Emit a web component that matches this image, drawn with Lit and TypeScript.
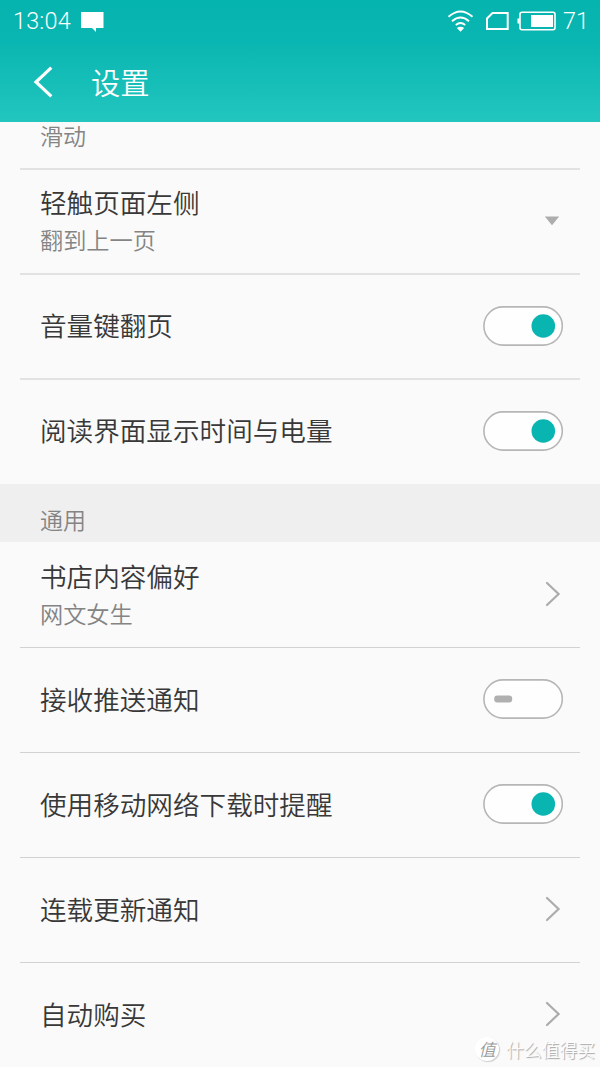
import { LitElement, html, css, svg, nothing } from "lit";
import { customElement, property } from "lit/decorators.js";

type Control = "on" | "off" | "next" | "menu";

@customElement("setting-row")
class SettingRow extends LitElement {
  @property() label = "";
  @property() note = "";
  @property() control: Control = "next";

  static styles = css`
    :host {
      display: flex;
      box-sizing: border-box;
      height: 105px;
      margin: 0 20px;
      padding: 0 17px 0 20px;
      align-items: center;
      justify-content: space-between;
      border-top: 1px solid #d2d2d2;
    }
    .text {
      margin-top: -2px;
    }
    :host(.double) .text {
      margin-top: -3px;
    }
    .label {
      font-size: 26.6px;
      line-height: 38px;
      color: #383838;
      white-space: nowrap;
    }
    .note {
      font-size: 23.2px;
      line-height: 36px;
      color: #848484;
    }
    svg {
      display: block;
      margin-top: -2px;
    }
    :host(.double) svg {
      margin-top: -1px;
    }
    .next {
      margin-right: 1px;
    }
    .menu {
      margin-right: 3px;
    }
  `;

  private renderControl() {
    switch (this.control) {
      case "on":
      case "off":
        return html`
          <svg width="80" height="40" viewBox="0 0 80 40">
            <rect x=".9" y=".9" width="78.4" height="38.2" rx="19.1" fill="#fefefe" stroke="#b6b6b6" stroke-width="1.6" />
            ${this.control === "on"
              ? svg`<circle cx="60.3" cy="20" r="11.8" fill="#08b5b1" />`
              : svg`<rect x="11.2" y="16.5" width="18" height="7" rx="3.2" fill="#b0b0b0" />`}
          </svg>
        `;
      case "menu":
        return html`<svg class="menu" width="16" height="10" viewBox="0 0 16 10"><path d="M.8 .5H15.2L8 9.3Z" fill="#adadad" /></svg>`;
      default:
        return html`<svg class="next" width="18" height="28" viewBox="0 0 18 28"><path d="M3 3 14.6 14 3 25" fill="none" stroke="#acacac" stroke-width="2.2" stroke-linecap="round" /></svg>`;
    }
  }

  render() {
    return html`
      <div class="text">
        <div class="label">${this.label}</div>
        ${this.note ? html`<div class="note">${this.note}</div>` : nothing}
      </div>
      ${this.renderControl()}
    `;
  }
}

@customElement("app-root")
class AppRoot extends LitElement {
  static styles = css`
    :host {
      display: block;
      position: relative;
      height: 1067px;
      overflow: hidden;
      background: #fafafa;
      font-family: "Noto Sans CJK SC", sans-serif;
      font-weight: 350;
    }
    header {
      height: 122px;
      background: linear-gradient(#05b3af, #0ab6b1 35%, #22c6bf);
      color: #fff;
    }
    .status {
      display: flex;
      align-items: center;
      height: 42px;
      padding: 0 11px 0 13px;
      font: 300 23.4px/42px Roboto, sans-serif;
    }
    .status svg {
      display: block;
    }
    .clock {
      width: 59px;
      letter-spacing: 0.2px;
    }
    .bubble {
      margin-left: 8px;
    }
    .icons {
      margin-left: auto;
      margin-right: 6px;
    }
    .bar {
      display: flex;
      align-items: center;
      height: 78px;
      padding-left: 32px;
      font-size: 29.3px;
    }
    .bar svg {
      margin-right: 36px;
      margin-top: 2px;
    }
    .tail {
      height: 46px;
      padding-left: 40px;
      font-size: 23px;
      line-height: 26px;
      color: #848484;
    }
    .double {
      border-top: 2px solid #e2e2e2;
    }
    .first {
      border-top-color: transparent;
    }
    .section {
      box-sizing: border-box;
      height: 58px;
      padding: 18px 0 0 40px;
      font-size: 23px;
      line-height: 34px;
      color: #848484;
      background: #efefef;
    }
    .top {
      margin-bottom: 1px;
    }
    .watermark {
      position: absolute;
      right: 5px;
      bottom: 5px;
      display: flex;
      align-items: center;
      gap: 7px;
      font-size: 17.8px;
      line-height: 26px;
      color: #fdfdfd;
      text-shadow: 1px 1px 1px #a4a4a4;
    }
    .seal {
      width: 24px;
      height: 24px;
      border-radius: 50%;
      background: #fff;
      box-shadow: 1px 1px 1px #ccc;
      color: #999;
      font-size: 17px;
      line-height: 23px;
      text-align: center;
      text-shadow: none;
      font-style: italic;
    }
  `;

  render() {
    return html`
      <header>
        <div class="status">
          <span class="clock">13:04</span>
          <svg class="bubble" width="24" height="22" viewBox="0 0 24 22"><path d="M1 2H23.5V18H16V22L12 18H1Z" fill="#fff" /></svg>
          <svg class="icons" width="110" height="24" viewBox="0 0 110 24" fill="none" stroke="#fff">
            ${svg`
              <path d="M1.5 7.8Q13.5-2.8 25.5 7.8M5 12.2Q13.5 4.7 22 12.2M8.8 16Q13.5 12 18.2 16" stroke-width="1.9" />
              <path d="M9.8 19Q13.5 16.4 17.2 19L13.5 22.8Z" fill="#fff" stroke="none" />
              <path d="M45.5 4H60.7V20H40V9.5Z" stroke-width="2" />
              <rect x="73" y="3.3" width="35" height="17.4" rx="2" stroke-width="1.6" />
              <rect x="84" y="6" width="22" height="12" fill="#fff" stroke="none" />
              <path d="M71.5 9.5V14.5" stroke-width="2" />
            `}
          </svg>
          <span>71</span>
        </div>
        <div class="bar">
          <svg width="23" height="34" viewBox="0 0 23 34"><path d="M19.3 2.7 4 17 19.3 31.3" fill="none" stroke="#fff" stroke-width="3.2" /></svg>
          <span>设置</span>
        </div>
      </header>
      <main>
        <div class="tail">滑动</div>
        <setting-row class="double" label="轻触页面左侧" note="翻到上一页" control="menu"></setting-row>
        <setting-row class="double" label="音量键翻页" control="on"></setting-row>
        <setting-row class="double top" label="阅读界面显示时间与电量" control="on"></setting-row>
        <div class="section">通用</div>
        <setting-row class="first" label="书店内容偏好" note="网文女生"></setting-row>
        <setting-row label="接收推送通知" control="off"></setting-row>
        <setting-row label="使用移动网络下载时提醒" control="on"></setting-row>
        <setting-row label="连载更新通知"></setting-row>
        <setting-row label="自动购买"></setting-row>
      </main>
      <div class="watermark"><span class="seal">值</span><span>什么值得买</span></div>
    `;
  }
}
